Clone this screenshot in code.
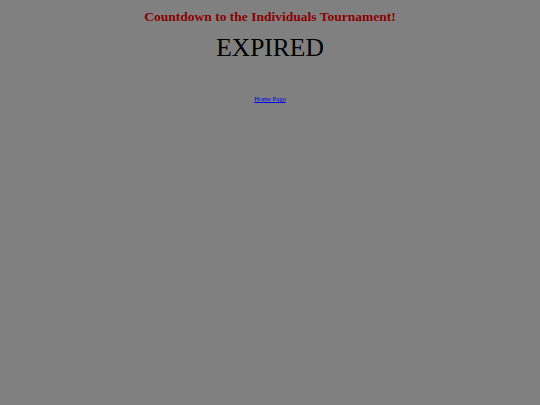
export default function App() {
  return (
    <div className="min-h-[405px] w-full bg-[#808080] text-center font-['Liberation_Serif',serif]">
      <h1 className="pt-[9px] text-[13.5px] font-bold leading-[16px] text-[#8b0000]">
        Countdown to the Individuals Tournament!
      </h1>
      <div className="mt-[6px] text-[25.5px] leading-[34px] text-black">EXPIRED</div>
      <div className="mt-[29px] text-[6.8px] leading-[10px]">
        <a href="#" className="text-[#0000ee] underline">Home Page</a>
      </div>
    </div>
  );
}
